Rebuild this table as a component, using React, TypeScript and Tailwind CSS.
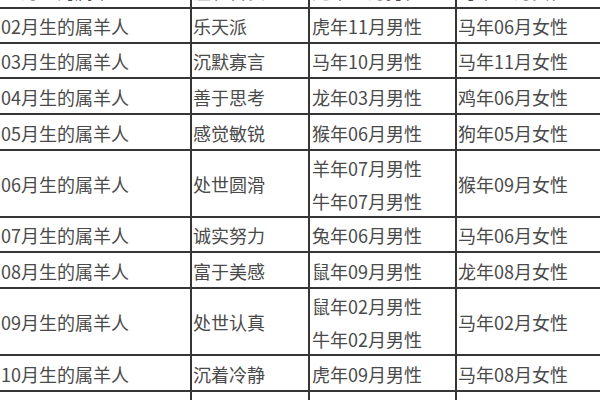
import React from "react";

type Row = { h: string; a: string; b: string; c: string[]; d: string };

const rows: Row[] = [
  { h: "h-[36px]", a: "01月生的属羊人", b: "温和善良", c: ["兔年12月男性"], d: "马年01月女性" },
  { h: "h-[35px]", a: "02月生的属羊人", b: "乐天派", c: ["虎年11月男性"], d: "马年06月女性" },
  { h: "h-[35px]", a: "03月生的属羊人", b: "沉默寡言", c: ["马年10月男性"], d: "马年11月女性" },
  { h: "h-[36px]", a: "04月生的属羊人", b: "善于思考", c: ["龙年03月男性"], d: "鸡年06月女性" },
  { h: "h-[36px]", a: "05月生的属羊人", b: "感觉敏锐", c: ["猴年06月男性"], d: "狗年05月女性" },
  { h: "h-[67px]", a: "06月生的属羊人", b: "处世圆滑", c: ["羊年07月男性", "牛年07月男性"], d: "猴年09月女性" },
  { h: "h-[35px]", a: "07月生的属羊人", b: "诚实努力", c: ["兔年06月男性"], d: "马年06月女性" },
  { h: "h-[36px]", a: "08月生的属羊人", b: "富于美感", c: ["鼠年09月男性"], d: "龙年08月女性" },
  { h: "h-[67px]", a: "09月生的属羊人", b: "处世认真", c: ["鼠年02月男性", "牛年02月男性"], d: "马年02月女性" },
  { h: "h-[36px]", a: "10月生的属羊人", b: "沉着冷静", c: ["虎年09月男性"], d: "马年08月女性" },
  { h: "h-[36px]", a: "11月生的属羊人", b: "聪明伶俐", c: ["狗年04月男性"], d: "马年03月女性" },
];

export default function App() {
  return (
    <div
      className="w-[600px] h-[400px] overflow-hidden bg-white text-[18px] text-[#4a4a4a]"
      style={{ fontFamily: '"Noto Sans CJK SC", "Noto Sans", sans-serif' }}
    >
      <div className="-mt-[27px] flex flex-col">
        {rows.map((r, i) => (
          <div key={i} className={`flex ${r.h} border-b-2 border-[#363636] w-[640px]`}>
            <div className="w-[192px] shrink-0 border-r-2 border-[#363636] flex items-center pl-px pt-[2px] whitespace-nowrap">
              {r.a}
            </div>
            <div className="w-[118px] shrink-0 border-r-2 border-[#363636] flex items-center pl-px pt-[2px] whitespace-nowrap">
              {r.b}
            </div>
            <div className="w-[147px] shrink-0 border-r-2 border-[#363636] flex flex-col justify-center pl-[2px] pt-[2px] whitespace-nowrap">
              {r.c.map((t, j) => (
                <div key={j} className="leading-[33px]">
                  {t}
                </div>
              ))}
            </div>
            <div className="flex-1 flex items-center pl-px pt-[2px] whitespace-nowrap">{r.d}</div>
          </div>
        ))}
      </div>
    </div>
  );
}
